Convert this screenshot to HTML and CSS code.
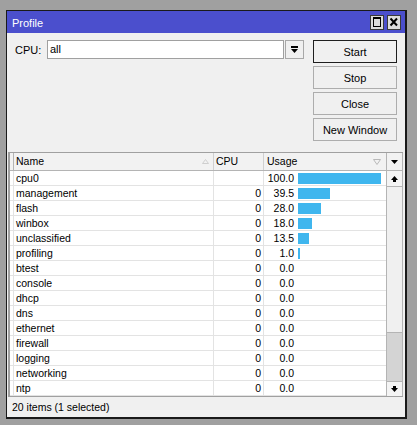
FILE: index.html
```html
<!DOCTYPE html>
<html>
<head>
<meta charset="utf-8">
<link rel="stylesheet" href="styles.css">
</head>
<body>
<div class="window">
  <div class="titlebar">
    <span class="title">Profile</span>
    <div class="tbtns">
      <span class="tbtn"><svg width="12" height="13" viewBox="0 0 12 13"><rect x="2.5" y="2.5" width="7" height="8" fill="none" stroke="#000"/><rect x="2" y="1" width="8" height="2" fill="#000"/></svg></span>
      <span class="tbtn"><svg width="12" height="13" viewBox="0 0 12 13"><path d="M2.5 2.5 L9 9.5 M9 2.5 L2.5 9.5" stroke="#000" stroke-width="2" fill="none"/></svg></span>
    </div>
  </div>
  <div class="top">
    <div class="cpu-row">
      <span class="cpu-label">CPU:</span>
      <div class="input">all</div>
      <div class="dd"><svg width="9" height="8" viewBox="0 0 9 8"><rect x="1" y="0" width="7" height="2" fill="#000"/><path d="M1 3 L8 3 L4.5 7 Z" fill="#000"/></svg></div>
    </div>
    <div class="buttons">
      <div class="btn default">Start</div>
      <div class="btn">Stop</div>
      <div class="btn">Close</div>
      <div class="btn">New Window</div>
    </div>
  </div>
  <div class="list">
    <div class="table">
      <div class="thead">
        <div class="hc lead"></div>
        <div class="hc name">Name<svg class="sort" width="7" height="5" viewBox="0 0 7 5"><path d="M0.5 4.5 L3.5 0.5 L6.5 4.5 Z" fill="none" stroke="#cfcfcf"/></svg></div>
        <div class="hc cpu">CPU</div>
        <div class="hc usage">Usage<svg class="sort" width="8" height="6" viewBox="0 0 8 6"><path d="M0.5 0.5 L7.5 0.5 L4 5.5 Z" fill="none" stroke="#b8b8b8"/></svg></div>
      </div>
      <div class="row"><div class="lead"></div><div class="name">cpu0</div><div class="cpu"></div><div class="usage"><span class="val">100.0</span><span class="bar" style="width:83px"></span></div></div>
      <div class="row"><div class="lead"></div><div class="name">management</div><div class="cpu">0</div><div class="usage"><span class="val">39.5</span><span class="bar" style="width:32px"></span></div></div>
      <div class="row"><div class="lead"></div><div class="name">flash</div><div class="cpu">0</div><div class="usage"><span class="val">28.0</span><span class="bar" style="width:23px"></span></div></div>
      <div class="row"><div class="lead"></div><div class="name">winbox</div><div class="cpu">0</div><div class="usage"><span class="val">18.0</span><span class="bar" style="width:14px"></span></div></div>
      <div class="row"><div class="lead"></div><div class="name">unclassified</div><div class="cpu">0</div><div class="usage"><span class="val">13.5</span><span class="bar" style="width:11px"></span></div></div>
      <div class="row"><div class="lead"></div><div class="name">profiling</div><div class="cpu">0</div><div class="usage"><span class="val">1.0</span><span class="bar" style="width:2px"></span></div></div>
      <div class="row"><div class="lead"></div><div class="name">btest</div><div class="cpu">0</div><div class="usage"><span class="val">0.0</span></div></div>
      <div class="row"><div class="lead"></div><div class="name">console</div><div class="cpu">0</div><div class="usage"><span class="val">0.0</span></div></div>
      <div class="row"><div class="lead"></div><div class="name">dhcp</div><div class="cpu">0</div><div class="usage"><span class="val">0.0</span></div></div>
      <div class="row"><div class="lead"></div><div class="name">dns</div><div class="cpu">0</div><div class="usage"><span class="val">0.0</span></div></div>
      <div class="row"><div class="lead"></div><div class="name">ethernet</div><div class="cpu">0</div><div class="usage"><span class="val">0.0</span></div></div>
      <div class="row"><div class="lead"></div><div class="name">firewall</div><div class="cpu">0</div><div class="usage"><span class="val">0.0</span></div></div>
      <div class="row"><div class="lead"></div><div class="name">logging</div><div class="cpu">0</div><div class="usage"><span class="val">0.0</span></div></div>
      <div class="row"><div class="lead"></div><div class="name">networking</div><div class="cpu">0</div><div class="usage"><span class="val">0.0</span></div></div>
      <div class="row"><div class="lead"></div><div class="name">ntp</div><div class="cpu">0</div><div class="usage"><span class="val">0.0</span></div></div>
    </div>
    <div class="scrollbar">
      <div class="sb-head"><svg width="7" height="4" viewBox="0 0 7 4"><path d="M0 0 L7 0 L3.5 4 Z" fill="#000"/></svg></div>
      <div class="sb-btn up"><svg width="7" height="6" viewBox="0 0 7 6"><path d="M0 4 L3.5 0 L7 4 Z" fill="#000"/><rect x="2" y="4" width="3" height="2" fill="#000"/></svg></div>
      <div class="sb-thumb"></div>
      <div class="sb-track"></div>
      <div class="sb-btn down"><svg width="7" height="6" viewBox="0 0 7 6"><rect x="2" y="0" width="3" height="2" fill="#000"/><path d="M0 2 L7 2 L3.5 6 Z" fill="#000"/></svg></div>
    </div>
  </div>
  <div class="status">20 items (1 selected)</div>
</div>
</body>
</html>
```
FILE: styles.css
```css
body {
  margin: 0;
  background: #a0a0a0;
  font-family: "Liberation Sans", Arial, sans-serif;
  font-size: 10.5px;
  color: #000;
}

.window {
  margin: 10px 0 0 6px;
  width: 401px;
  height: 409px;
  box-sizing: border-box;
  border: 1px solid #1a1a1a;
  border-right-width: 2px;
  border-bottom-width: 2px;
  background: #f0f0f0;
  display: flex;
  flex-direction: column;
}

.titlebar {
  flex: none;
  height: 22px;
  background: #4b4fcd;
  display: flex;
  align-items: center;
  justify-content: space-between;
  padding: 0 4px 0 5px;
}

.title {
  color: #fff;
  font-size: 11px;
  padding-top: 2px;
}

.tbtns {
  display: flex;
  gap: 3px;
  margin-top: 1px;
}

.tbtn {
  width: 14px;
  height: 15px;
  box-sizing: border-box;
  border: 1px solid #3a3a3a;
  background: #dcdcdc;
  display: flex;
  align-items: center;
  justify-content: center;
}

.top {
  flex: none;
  height: 119px;
  box-sizing: border-box;
  padding: 7px 8px 0 8px;
  display: flex;
  justify-content: space-between;
  align-items: flex-start;
}

.cpu-row {
  display: flex;
  align-items: center;
}

.cpu-label {
  width: 32px;
  font-size: 11px;
}

.input {
  width: 237px;
  height: 19px;
  box-sizing: border-box;
  border: 1px solid #a0a0a0;
  background: #fff;
  padding-left: 2px;
  line-height: 17px;
  font-size: 11px;
}

.dd {
  margin-left: 1px;
  width: 19px;
  height: 19px;
  box-sizing: border-box;
  border: 1px solid #a8a8a8;
  background: #f0f0f0;
  display: flex;
  align-items: center;
  justify-content: center;
}

.buttons {
  width: 84px;
  display: flex;
  flex-direction: column;
  gap: 3px;
}

.btn {
  height: 23px;
  box-sizing: border-box;
  border: 1px solid #adadad;
  background: #f0f0f0;
  display: flex;
  align-items: center;
  justify-content: center;
  font-size: 11px;
}

.btn.default {
  border-color: #1e1e1e;
}

.list {
  flex: none;
  height: 245px;
  box-sizing: border-box;
  margin: 0 2px 0 1px;
  border-top: 1px solid #a0a0a0;
  border-left: 2px solid #a0a0a0;
  border-bottom: 1px solid #a0a0a0;
  background: #fff;
  display: flex;
}

.table {
  flex: 1;
  display: flex;
  flex-direction: column;
}

.thead, .row {
  display: grid;
  grid-template-columns: 3px 200px 50px 123px;
  box-sizing: border-box;
}

.thead {
  height: 18px;
  background: #f2f2f2;
  border-bottom: 1px solid #b4b4b4;
  line-height: 17px;
}

.hc {
  display: flex;
  align-items: center;
  justify-content: space-between;
}

.hc.name, .hc.cpu, .hc.usage {
  border-left: 1px solid #b4b4b4;
}

.hc.name { padding: 0 4px 0 2px; }
.hc.cpu { padding-left: 2px; border-left-color: #d0d0d0; }
.hc.usage { padding: 0 5px 0 3px; border-left-color: #d0d0d0; }

.sort {
  flex: none;
}

.row {
  height: 15px;
  border-bottom: 1px solid #e3e3e3;
  line-height: 14px;
}

.row .name, .row .cpu, .row .usage {
  border-left: 1px solid #e3e3e3;
}

.row .name { padding-left: 2px; white-space: nowrap; }
.row .cpu { text-align: right; padding-right: 2px; }

.row .usage {
  display: flex;
  align-items: flex-start;
}

.val {
  width: 30px;
  text-align: right;
  flex: none;
}

.bar {
  margin: 2px 0 0 4px;
  height: 11px;
  background: #3fb6ee;
  flex: none;
}

.scrollbar {
  width: 17px;
  flex: none;
  display: flex;
  flex-direction: column;
}

.sb-head {
  height: 18px;
  box-sizing: border-box;
  border: 1px solid #b4b4b4;
  border-top: none;
  background: #f2f2f2;
  display: flex;
  align-items: center;
  justify-content: center;
}

.sb-btn {
  box-sizing: border-box;
  border: 1px solid #b4b4b4;
  border-top: none;
  background: #f4f4f4;
  display: flex;
  align-items: center;
  justify-content: center;
}

.sb-btn.up { height: 16px; }
.sb-btn.down { height: 15px; border-top: 1px solid #b4b4b4; border-bottom: none; }

.sb-thumb {
  height: 146px;
  box-sizing: border-box;
  border: 1px solid #b4b4b4;
  border-top: none;
  background: #f0f0f0;
}

.sb-track {
  height: 48px;
  box-sizing: border-box;
  border-left: 1px solid #b4b4b4;
  border-right: 1px solid #b4b4b4;
  background: #d4d4d4;
}

.status {
  flex: 1;
  padding-left: 5px;
  display: flex;
  align-items: center;
  font-size: 10.5px;
}
```
